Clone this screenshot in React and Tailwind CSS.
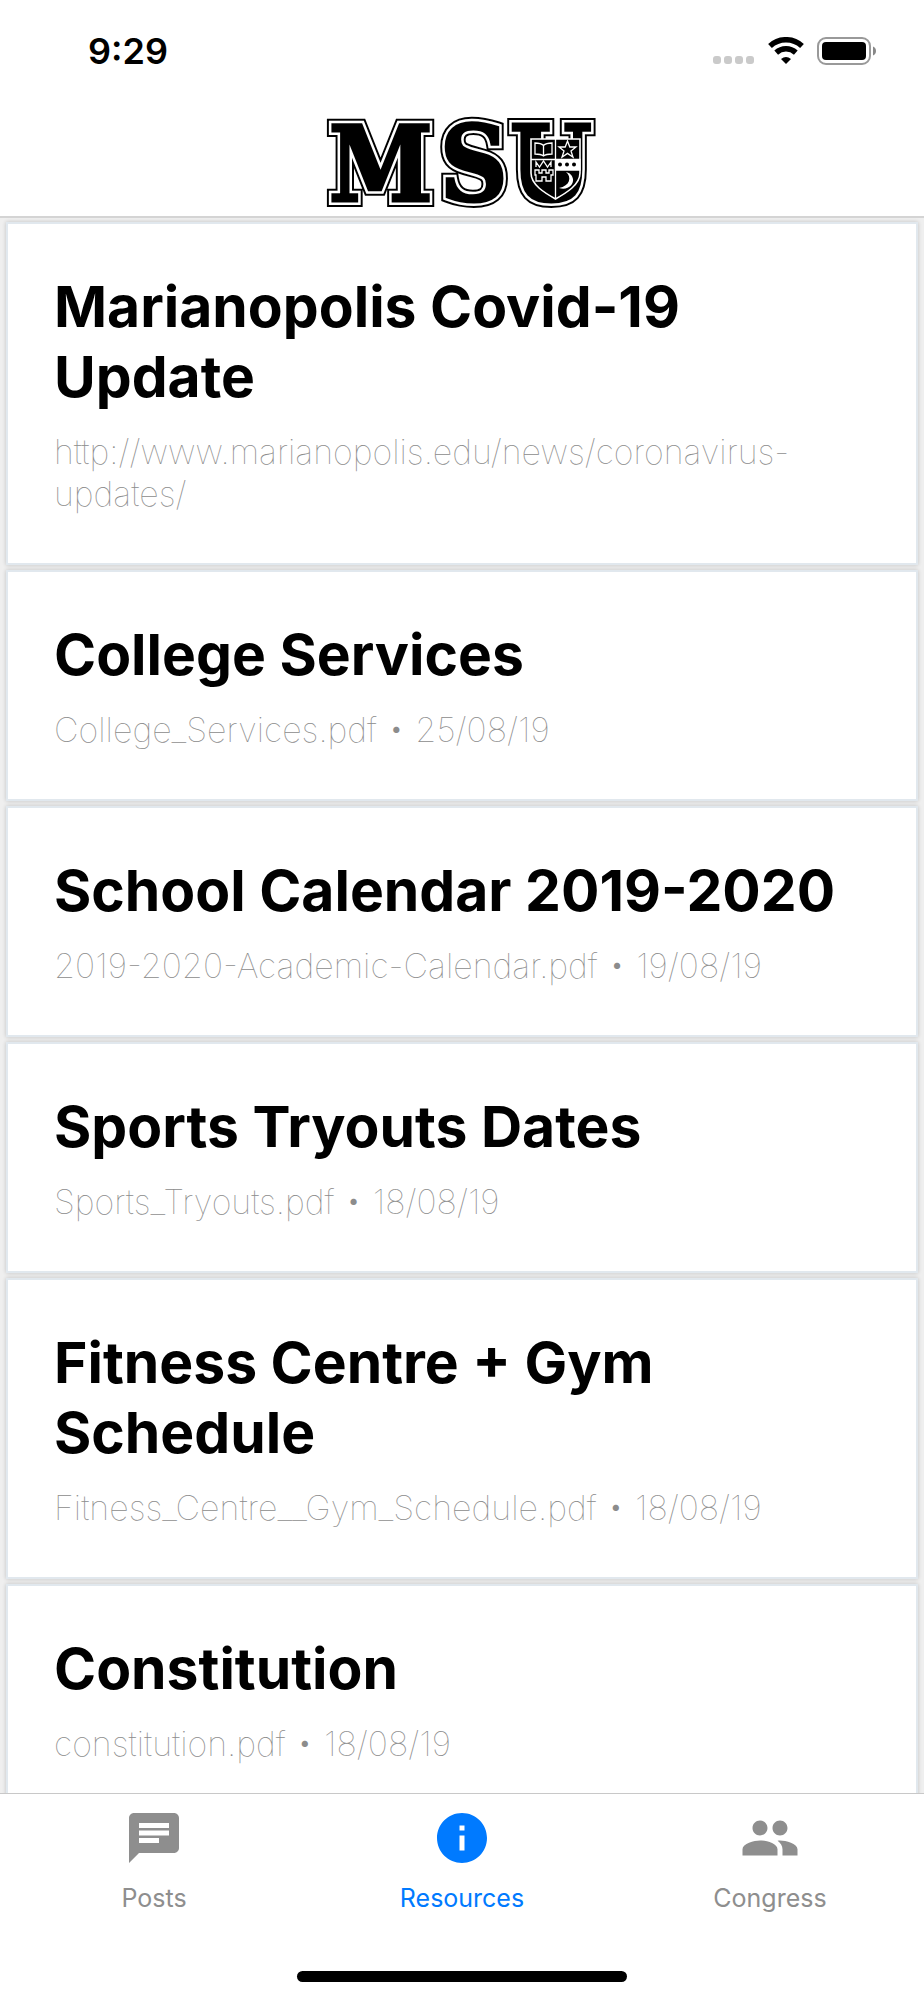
import { MdChat, MdInfo, MdPeople } from "react-icons/md";

const resources = [
  { title: "Marianopolis Covid-19 Update", detail: "http://www.marianopolis.edu/news/coronavirus-updates/" },
  { title: "College Services", detail: "College_Services.pdf", date: "25/08/19" },
  { title: "School Calendar 2019-2020", detail: "2019-2020-Academic-Calendar.pdf", date: "19/08/19" },
  { title: "Sports Tryouts Dates", detail: "Sports_Tryouts.pdf", date: "18/08/19" },
  { title: "Fitness Centre + Gym Schedule", detail: "Fitness_Centre__Gym_Schedule.pdf", date: "18/08/19" },
  { title: "Constitution", detail: "constitution.pdf", date: "18/08/19" },
];

const tabs = [
  { name: "Posts", icon: MdChat },
  { name: "Resources", icon: MdInfo, active: true },
  { name: "Congress", icon: MdPeople },
];

function StatusBar() {
  return (
    <div className="flex h-[102px] items-center justify-between pl-[88px] pr-[48px]">
      <span className="text-[36px] leading-[44px] font-semibold">9:29</span>
      <div className="flex items-center gap-[13px]">
        <svg width="42" height="28" viewBox="0 0 42 28" fill="#cacaca">
          <rect x="0" y="19" width="8" height="8" rx="3" />
          <rect x="11" y="19" width="8" height="8" rx="3" />
          <rect x="22" y="19" width="8" height="8" rx="3" />
          <rect x="33" y="19" width="8" height="8" rx="3" />
        </svg>
        <svg width="36" height="28" viewBox="0 0 36 28">
          <g fill="none" stroke="#000" strokeWidth="5.5">
            <path d="M2 9a23.500 23.500 0 0 1 32 0" />
            <path d="M8.200 15.600a14.500 14.500 0 0 1 19.600 0" />
          </g>
          <path d="M18 27l-5-5a8 8 0 0 1 10 0z" />
        </svg>
        <svg width="59" height="28" viewBox="0 0 59 28">
          <rect x="1" y="1" width="52" height="26" rx="8" fill="none" stroke="#999" strokeWidth="2" />
          <rect x="5" y="5" width="44" height="18" rx="4" />
          <path d="M56 9.500c4 1.500 4 7.500 0 9z" fill="#888" />
        </svg>
      </div>
    </div>
  );
}

function Logo() {
  return (
    <svg className="overflow-visible" width="272" height="94" viewBox="0 0 272 94" role="img" aria-label="MSU">
      <g fontFamily="'DejaVu Serif Condensed', 'DejaVu Serif', serif" fontWeight="700" fontSize="104">
        <text x="3 114 184" y="87" fill="#000" stroke="#000" strokeWidth="12">MSU</text>
        <text x="3 114 184" y="87" fill="#fff" stroke="#fff" strokeWidth="8">MSU</text>
        <text x="3 114 184" y="87" fill="#000" stroke="#000" strokeWidth="3">MSU</text>
      </g>
      {/* crest */}
      <g fill="none" stroke="#fff" strokeWidth="1.3">
        <path d="M205 25h49v34c0 12-14 20-24.500 26c-10.500-6-24.500-14-24.500-26z" fill="#000" stroke="#fff" strokeWidth="1.6" />
        <path d="M229.500 25v60M205 45.500h24.500" />
        {/* book */}
        <path d="M209 29c3 0 6 0 8.500 2.500c2.500-2.500 5.500-2.500 8.500-2.500v11c-3 0-6 0-8.500 2c-2.500-2-5.500-2-8.500-2zM217.500 31.500v10.500" />
        {/* star */}
        <path d="M241.500 27l2.300 6h6.200l-5 4l2 6.200l-5.500-3.800l-5.500 3.800l2-6.200l-5-4h6.200z" />
        {/* castle */}
        <path d="M209 56h4v3h3v-3h4v3h3v-3h4v5h-2v6h-5v-4h-4v4h-6v-6h-1z" />
        <path d="M210 53v-5l3.500 5l4-6l4 6l3.500-5v5" />
        {/* dots on a band */}
        <path d="M229.500 45.500h24.500v10.500h-24.500z" fill="#fff" />
        <g fill="#000" stroke="none">
          <circle cx="234" cy="50.500" r="2" />
          <circle cx="241" cy="50.500" r="2" />
          <circle cx="248" cy="50.500" r="2" />
        </g>
        {/* moon */}
        <path d="M240 58c6 5 4 14-7 16c9 3 15-4 14-9c-1-4-3-6-7-7z" fill="#fff" stroke="none" />
      </g>
    </svg>
  );
}

function ResourceCard({ title, detail, date }) {
  return (
    <a href="#" className="block border-2 border-[#e1e8ee] bg-white px-[46px] pt-[48px] pb-[48px] shadow-[0_0_4px_rgba(0,0,0,0.2)]">
      <h2 className="text-[57px] leading-[70px] font-bold">{title}</h2>
      <p className="mt-[19px] text-[34px] leading-[42px] font-thin text-[#8c8c8c]">
        {detail}
        {date && ` • ${date}`}
      </p>
    </a>
  );
}

export default function App() {
  return (
    <div className="flex h-screen flex-col overflow-hidden bg-white font-['Inter',sans-serif] text-black">
      <header className="border-b-2 border-[#d4d4d4]">
        <StatusBar />
        <div className="flex h-[114px] items-center justify-center pt-1">
          <Logo />
        </div>
      </header>
      <main className="flex min-h-0 flex-1 flex-col gap-[5px] overflow-hidden bg-[#efefef] px-[6px] pt-1">
        {resources.map((item) => (
          <ResourceCard key={item.title} {...item} />
        ))}
      </main>
      <nav className="flex h-[207px] flex-col items-center justify-between border-t border-[#c8c8c8] pb-[18px]">
        <div className="grid w-full grid-cols-3">
          {tabs.map(({ name, icon: Icon, active }) => (
            <button key={name} className={`flex flex-col items-center pt-[14px] ${active ? "text-[#007aff]" : "text-[#8e8e8e]"}`}>
              <Icon size={60} />
              <span className="mt-[15px] text-[25px] leading-[30px]">{name}</span>
            </button>
          ))}
        </div>
        <div className="h-[11px] w-[330px] rounded-full bg-black"></div>
      </nav>
    </div>
  );
}
